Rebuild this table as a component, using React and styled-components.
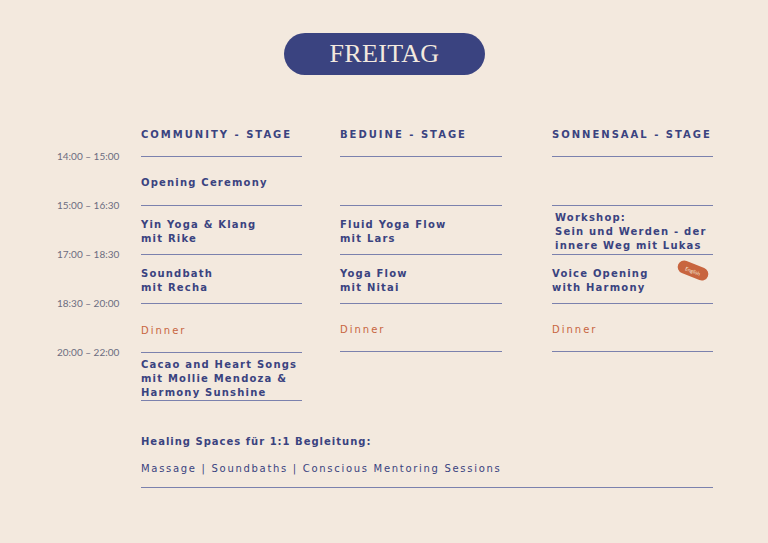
import React from "react";
import styled, { createGlobalStyle } from "styled-components";

const navy = "#3a4380";
const orange = "#c8653f";
const rule = "#7b81ad";

const GlobalStyle = createGlobalStyle`
  html, body { margin: 0; padding: 0; background: #f3e9de; }
`;

const Page = styled.div`
  width: 768px;
  height: 543px;
  box-sizing: border-box;
  padding: 33px 0 0 57px;
  background: #f3e9de;
  font-family: "DejaVu Sans", sans-serif;
  color: ${navy};
  overflow: hidden;
`;

const DayPill = styled.div`
  width: 201px;
  height: 42px;
  margin-left: 227px;
  border-radius: 21px;
  background: ${navy};
  color: #f3e9de;
  display: flex;
  align-items: center;
  justify-content: center;
  font-family: "Liberation Serif", serif;
  font-size: 26px;
  letter-spacing: 0.3px;
`;

const Schedule = styled.div`
  display: flex;
  margin-top: 53px;
`;

const TimeColumn = styled.div`
  width: 84px;
  padding-top: 22px;
  display: flex;
  flex-direction: column;
`;

const TimeLabel = styled.div`
  height: 49px;
  line-height: 12px;
  font-family: Lato, sans-serif;
  font-size: 10px;
  color: #6c6c80;
`;

const Stage = styled.div`
  width: ${(p) => p.$width}px;
  margin-left: ${(p) => p.$offset || 0}px;
  display: flex;
  flex-direction: column;
`;

const StageTitle = styled.div`
  height: 14px;
  line-height: 14px;
  margin-bottom: 14px;
  font-size: 10px;
  font-weight: bold;
  letter-spacing: 2px;
  white-space: nowrap;
`;

const Slot = styled.div`
  position: relative;
  height: 49px;
  box-sizing: border-box;
  border-top: 1px solid ${rule};
  border-bottom: ${(p) => (p.$last ? `1px solid ${rule}` : "none")};
  padding: 4px 0 0 ${(p) => p.$indent || 0}px;
  display: flex;
  align-items: center;
`;

const EventName = styled.div`
  font-size: 10px;
  font-weight: bold;
  letter-spacing: 1.2px;
  line-height: 14px;
  white-space: nowrap;
`;

const Meal = styled.div`
  font-size: 10px;
  letter-spacing: 2px;
  color: ${orange};
`;

const LangBadge = styled.div`
  position: absolute;
  right: 4px;
  top: 9px;
  width: 32px;
  height: 13px;
  border-radius: 7px;
  background: ${orange};
  color: #f3e9de;
  font-family: Lato, sans-serif;
  font-size: 5px;
  display: flex;
  align-items: center;
  justify-content: center;
  transform: rotate(22deg);
`;

const Footer = styled.div`
  width: 572px;
  margin: 34px 0 0 84px;
  border-bottom: 1px solid ${rule};
`;

const FooterTitle = styled.div`
  font-size: 10px;
  font-weight: bold;
  letter-spacing: 1px;
  line-height: 14px;
`;

const FooterText = styled.div`
  margin-top: 13px;
  padding-bottom: 11px;
  font-size: 10px;
  letter-spacing: 1.7px;
  line-height: 14px;
`;

const times = ["14:00 – 15:00", "15:00 – 16:30", "17:00 – 18:30", "18:30 – 20:00", "20:00 – 22:00"];

const stages = [
  {
    title: "COMMUNITY - STAGE",
    width: 161,
    offset: 0,
    slots: [
      { lines: ["Opening Ceremony"] },
      { lines: ["Yin Yoga & Klang", "mit Rike"] },
      { lines: ["Soundbath", "mit Recha"] },
      { meal: "Dinner" },
      { lines: ["Cacao and Heart Songs", "mit Mollie Mendoza &", "Harmony Sunshine"] },
    ],
  },
  {
    title: "BEDUINE - STAGE",
    width: 162,
    offset: 38,
    slots: [
      {},
      { lines: ["Fluid Yoga Flow", "mit Lars"] },
      { lines: ["Yoga Flow", "mit Nitai"] },
      { meal: "Dinner" },
    ],
  },
  {
    title: "SONNENSAAL - STAGE",
    width: 161,
    offset: 50,
    slots: [
      {},
      { lines: ["Workshop:", "Sein und Werden - der", "innere Weg mit Lukas"], indent: 3 },
      { lines: ["Voice Opening", "with Harmony"], badge: "English" },
      { meal: "Dinner" },
    ],
  },
];

const App = () => {
  return (
    <Page>
      <GlobalStyle />
      <DayPill>FREITAG</DayPill>
      <Schedule>
        <TimeColumn>
          {times.map((t) => (
            <TimeLabel key={t}>{t}</TimeLabel>
          ))}
        </TimeColumn>
        {stages.map((stage) => (
          <Stage key={stage.title} $width={stage.width} $offset={stage.offset}>
            <StageTitle>{stage.title}</StageTitle>
            {stage.slots.map((slot, i) => (
              <Slot key={i} $last={i === stage.slots.length - 1} $indent={slot.indent}>
                {slot.lines && (
                  <EventName>
                    {slot.lines.map((l, j) => (
                      <div key={j}>{l}</div>
                    ))}
                  </EventName>
                )}
                {slot.meal && <Meal>{slot.meal}</Meal>}
                {slot.badge && <LangBadge>{slot.badge}</LangBadge>}
              </Slot>
            ))}
          </Stage>
        ))}
      </Schedule>
      <Footer>
        <FooterTitle>Healing Spaces für 1:1 Begleitung:</FooterTitle>
        <FooterText>Massage | Soundbaths | Conscious Mentoring Sessions</FooterText>
      </Footer>
    </Page>
  );
};

export default App;
